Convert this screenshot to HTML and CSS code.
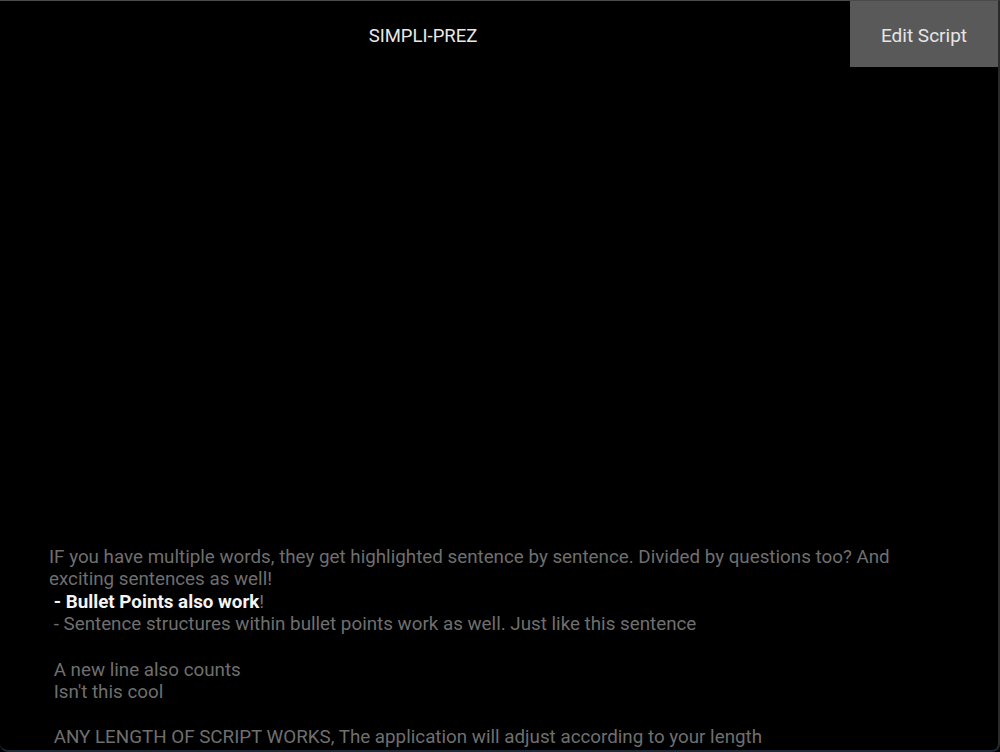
FILE: index.html
```html
<!DOCTYPE html>
<html lang="en">
<head>
<meta charset="utf-8">
<title>SIMPLI-PREZ</title>
<link rel="stylesheet" href="styles.css">
</head>
<body>
<div class="app">
  <header class="topbar">
    <div class="title">SIMPLI-PREZ</div>
    <button class="edit-btn">Edit Script</button>
  </header>
  <main class="stage">
    <div class="script"><div class="line">IF you have multiple words, they get highlighted sentence by sentence. Divided by questions too? And exciting sentences as well!</div><div class="line"> <span class="hl">- Bullet Points also work</span>!</div><div class="line"> - Sentence structures within bullet points work as well. Just like this sentence</div><div class="line blank"> </div><div class="line"> A new line also counts</div><div class="line"> Isn't this cool</div><div class="line blank"> </div><div class="line"> ANY LENGTH OF SCRIPT WORKS, The application will adjust according to your length</div></div>
  </main>
</div>
</body>
</html>
```
FILE: styles.css
```css
html, body {
  margin: 0;
  padding: 0;
  background: #000;
}
body {
  font-family: Roboto, "Liberation Sans", sans-serif;
}
.app {
  box-sizing: border-box;
  width: 1000px;
  height: 752px;
  background: #000;
  border-top: 1px solid #4a4a4a;
  border-right: 2px solid #2a2a2a;
  border-bottom: 2px solid #1f2b37;
  border-radius: 0 0 8px 8px;
  display: flex;
  flex-direction: column;
  overflow: hidden;
}
.topbar {
  display: flex;
  align-items: flex-start;
  height: 67px;
  flex: none;
}
.title {
  flex: 1;
  text-align: center;
  color: #e8e8e8;
  font-size: 18.5px;
  line-height: 20px;
  padding: 25px 4px 0 0;
}
.edit-btn {
  width: 148px;
  height: 66px;
  margin: 0;
  border: none;
  background: #595959;
  color: #e6e6e6;
  font-family: Roboto, "Liberation Sans", sans-serif;
  font-size: 19px;
  padding: 2px 0 0;
  box-shadow: 0 1px 2px rgba(0,0,0,0.6);
}
.stage {
  flex: 1;
  display: flex;
  flex-direction: column;
  justify-content: flex-end;
  padding: 0 40px 1px 49px;
}
.script {
  color: #6f6f6f;
  font-size: 18.8px;
  line-height: 22.6px;
  white-space: pre-wrap;
  max-width: 860px;
}
.hl {
  color: #f4f4f4;
  font-weight: 700;
}
```
